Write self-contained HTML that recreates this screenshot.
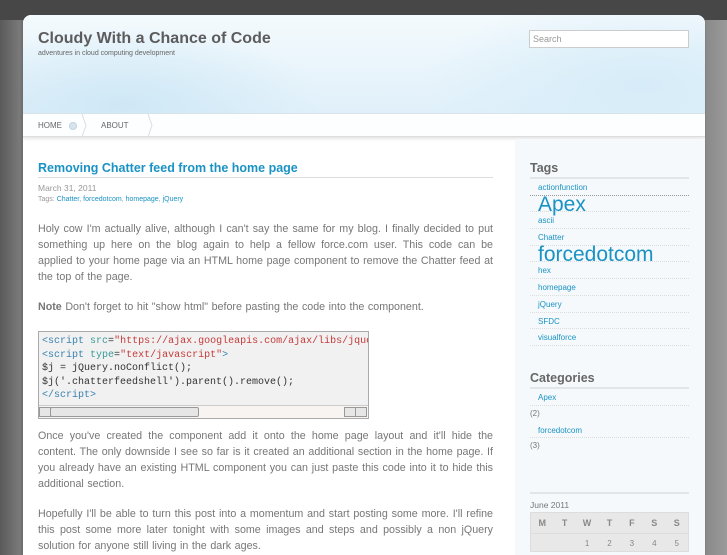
<!DOCTYPE html>
<html><head><meta charset="utf-8"><style>
*{margin:0;padding:0;box-sizing:border-box}
body{width:727px;height:545px;overflow:hidden;background:linear-gradient(90deg,#5a5a5a 0,#7a7a7a 20px,#6a6a6a 23px,#6a6a6a 704px,#8a8a8a 706px,#9a9a9a 727px);font-family:"Liberation Sans",sans-serif;position:relative}
.top{position:absolute;left:0;top:0;width:727px;height:20px;background:#474747}
.page{position:absolute;left:23px;top:15px;width:682px;height:540px;background:#fff;border-radius:8px 8px 0 0;overflow:hidden}
.header{height:99px;background:radial-gradient(ellipse 200px 80px at 100px 90px,#cfe8f6,transparent),radial-gradient(ellipse 220px 90px at 620px 70px,#d6ecf8,transparent),linear-gradient(180deg,#f4fafd,#e0f0fa);border-bottom:1px solid #d8e3ea;position:relative}
.title{position:absolute;left:15px;top:15px;font-size:16px;font-weight:bold;color:#5c5c5c}
.sub{position:absolute;left:15px;top:35px;font-size:7px;color:#666}
.search{position:absolute;left:506px;top:15px;width:160px;height:18px;background:#fff;border:1px solid #ccc;font-size:9px;color:#999;padding:3px 3px}
.nav{height:23px;background:#fdfeff;border-bottom:1px solid #ddd;position:relative;font-size:8px;color:#666;box-shadow:0 2px 3px #e5e5e5}
.nav span{position:absolute;top:7px}
.dot{position:absolute;left:46px;top:8px;width:8px;height:8px;border-radius:50%;background:#d6e4ef;border:1px solid #c2d3df}
.main{position:absolute;left:15px;top:146px;width:455px;color:#777;font-size:10.7px;line-height:16px}
h2{font-size:12.5px;color:#1a93c4;font-weight:bold;border-bottom:1px solid #ddd;padding-bottom:1px;line-height:15px}
.meta{font-size:8.5px;color:#999;margin-top:4px;line-height:12px}
.meta2{font-size:7px;color:#999;line-height:12px}
.meta2 a,.side a{color:#1a93c4;text-decoration:none}
p{text-align:justify;margin-top:14px;word-spacing:0.6px}
.code{margin-top:16px;width:331px;border:1px solid #aaa;background:#f1f1f1;font-family:"Liberation Mono",monospace;font-size:10px;line-height:13.6px;padding:3px 3px 0;overflow:hidden;white-space:nowrap;color:#333}
.t{color:#3a82b0}.a{color:#3a9a9a}.s{color:#c63a3a}
.sb{height:13px;margin:2px -3px 0;background:#f8f4f2;border-top:1px solid #ccc;position:relative}
.sb i{position:absolute;top:1px;height:10px;border:1px solid #999;background:#e6e6e6}
.side{position:absolute;left:492px;top:124px;width:190px;height:420px;background:#f5f9fc}
.side .w{position:absolute;left:15px;width:159px}
.side h3{font-size:12.5px;color:#666;border-bottom:2px solid #e3e6e8;padding-bottom:1px;line-height:15px}
.tag{border-bottom:1px dotted #ddd;padding-left:8px;font-size:8px;height:16.7px;line-height:17px}
.cal{font-size:8.5px;color:#777}
.ct{margin-top:2px;width:159px;height:40px;background:#e8e8e8;border:1px solid #ddd;font-size:9px;color:#888}
.ct div{display:flex;justify-content:space-around;height:20px;line-height:20px}
.ct div span{width:14px;text-align:center}
</style></head><body>
<div class="top"></div>
<div class="page">
<div class="header">
<div class="title">Cloudy With a Chance of Code</div>
<div class="sub">adventures in cloud computing development</div>
<div class="search">Search</div>
</div>
<div class="nav"><span style="left:15px">HOME</span><div class="dot"></div><span style="left:78px">ABOUT</span>
<svg style="position:absolute;left:56px;top:0" width="10" height="23"><path d="M3 0 L7 11.5 L3 23" fill="none" stroke="#ddd"/></svg>
<svg style="position:absolute;left:122px;top:0" width="10" height="23"><path d="M3 0 L7 11.5 L3 23" fill="none" stroke="#ddd"/></svg></div>
<div class="side">
<div class="w" style="top:22px"><h3>Tags</h3>
<div class="tag" style="border-bottom-color:#999"><a>actionfunction</a></div>
<div class="tag" style="position:relative"><a style="position:absolute;top:-1px;font-size:21px;line-height:20px">Apex</a></div>
<div class="tag"><a>ascii</a></div>
<div class="tag"><a>Chatter</a></div>
<div class="tag" style="position:relative"><a style="position:absolute;top:-1px;font-size:21px;line-height:20px">forcedotcom</a></div>
<div class="tag"><a>hex</a></div>
<div class="tag"><a>homepage</a></div>
<div class="tag"><a>jQuery</a></div>
<div class="tag"><a>SFDC</a></div>
<div class="tag"><a>visualforce</a></div></div>
<div class="w" style="top:232px"><h3>Categories</h3>
<div class="tag"><a>Apex</a></div><div style="font-size:8px;color:#777;height:16px;line-height:16px">(2)</div>
<div class="tag"><a>forcedotcom</a></div><div style="font-size:8px;color:#777;height:16px;line-height:16px">(3)</div></div>
<div class="w cal" style="top:353px;border-top:2px solid #e3e6e8;padding-top:6px">June 2011
<div class="ct"><div style="font-weight:bold"><span>M</span><span>T</span><span>W</span><span>T</span><span>F</span><span>S</span><span>S</span></div>
<div style="border-top:1px solid #ddd;font-size:8px"><span></span><span></span><span>1</span><span>2</span><span>3</span><span>4</span><span>5</span></div></div></div>
</div>
<div class="main">
<h2>Removing Chatter feed from the home page</h2>
<div class="meta">March 31, 2011</div>
<div class="meta2">Tags: <a>Chatter</a>, <a>forcedotcom</a>, <a>homepage</a>, <a>jQuery</a></div>
<p style="margin-top:15px">Holy cow I'm actually alive, although I can't say the same for my blog. I finally decided to put something up here on the blog again to help a fellow force.com user. This code can be applied to your home page via an HTML home page component to remove the Chatter feed at the top of the page.</p>
<p><b>Note</b> Don't forget to hit "show html" before pasting the code into the component.</p>
<div class="code">
<div><span class="t">&lt;script</span> <span class="a">src</span>=<span class="s">"https://ajax.googleapis.com/ajax/libs/jquery/1.5/jquery.min.js"</span></div>
<div><span class="t">&lt;script</span> <span class="a">type</span>=<span class="s">"text/javascript"</span><span class="t">&gt;</span></div>
<div>$j = jQuery.noConflict();</div>
<div>$j('.chatterfeedshell').parent().remove();</div>
<div><span class="t">&lt;/script&gt;</span></div>
<div class="sb"><i style="left:0;width:12px"></i><i style="left:11px;width:149px;border-radius:2px"></i><i style="left:305px;width:12px"></i><i style="left:316px;width:12px"></i></div>
</div>
<p style="margin-top:9px">Once you've created the component add it onto the home page layout and it'll hide the content. The only downside I see so far is it created an additional section in the home page. If you already have an existing HTML component you can just paste this code into it to hide this additional section.</p>
<p>Hopefully I'll be able to turn this post into a momentum and start posting some more. I'll refine this post some more later tonight with some images and steps and possibly a non jQuery solution for anyone still living in the dark ages.</p>
</div>
</div>
</body></html>
